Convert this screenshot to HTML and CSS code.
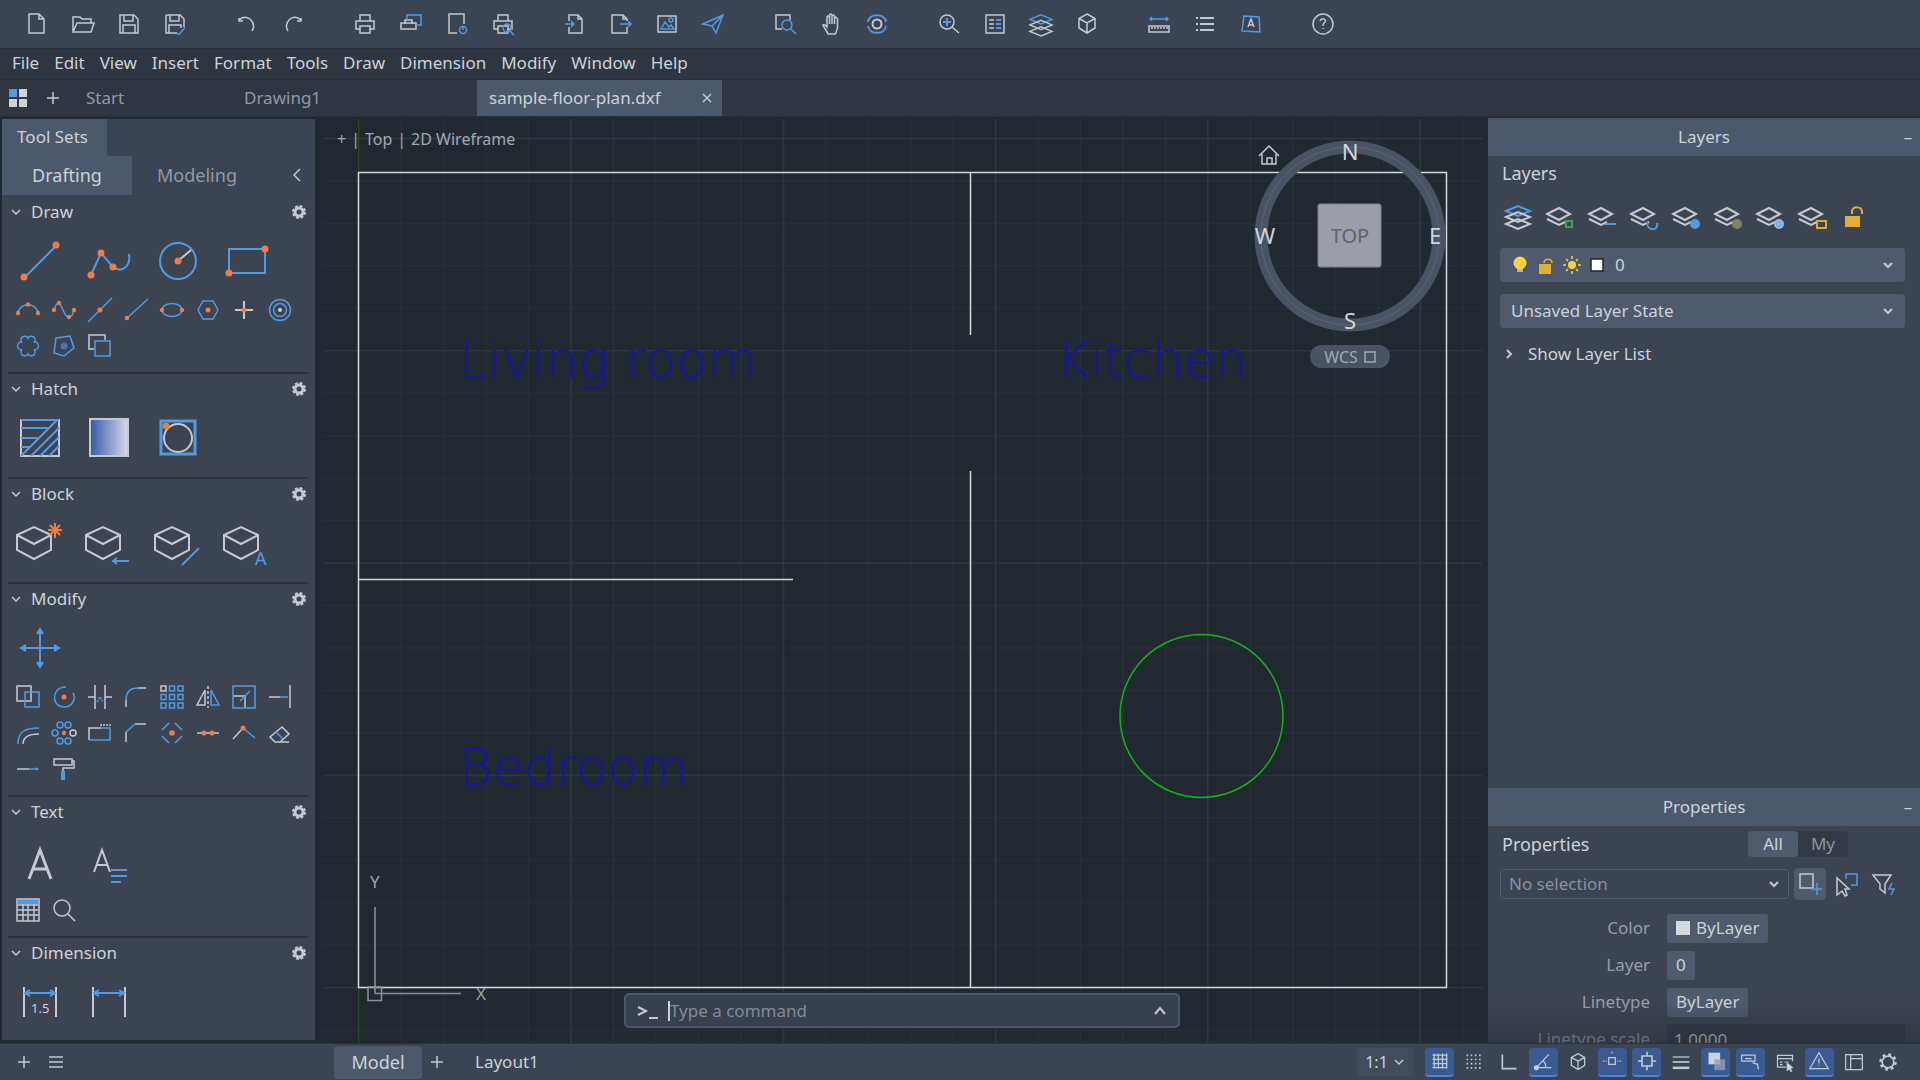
FILE: index.html
```html
<!DOCTYPE html>
<html lang="en">
<head>
<meta charset="utf-8">
<title>sample-floor-plan.dxf</title>
<link rel="stylesheet" href="styles.css">
</head>
<body>
<svg class="defs" aria-hidden="true">
  <symbol id="gear" viewBox="0 0 14 14"><circle cx="7" cy="7" r="4" stroke-width="3"/><circle cx="7" cy="7" r="6" stroke-width="2" stroke-dasharray="2.8 1.9"/></symbol>
  <symbol id="down" viewBox="0 0 12 12"><path d="M2 4l4 4 4-4"/></symbol>
  <symbol id="plus" viewBox="0 0 14 14"><path d="M7 1v12M1 7h12"/></symbol>
  <symbol id="block" viewBox="0 0 50 50"><path d="M8 17l17-8 17 8v15l-17 9-17-9zM8 17l17 9 17-9" stroke-width="2"/></symbol>
  <symbol id="sheets" viewBox="0 0 30 30"><path d="M2 12l12-6 11 6-11 6zM2 17l12 6 6-3"/></symbol>
  <symbol id="stack" viewBox="0 0 30 30"><path class="b" d="M3 9l12-5 12 5-12 5z"/><path d="M3 15l12-5 12 5-12 5zM3 22l12-5 12 5-12 5z"/></symbol>
  <symbol id="printer" viewBox="0 0 24 24"><path d="M7 9V3h10v6M7 17H3V9h18v8h-4M7 14h10v7H7z"/></symbol>
  <symbol id="cube" viewBox="0 0 24 24"><path d="M12 2l8 4.500v9.500l-8 5-8-5V6.500zM4 6.500l8 4.500 8-4.500M12 11v10"/></symbol>
  <symbol id="page" viewBox="0 0 24 24"><path d="M4 2h10l5 5v14H4zM14 2v5h5"/></symbol>
  <symbol id="disk" viewBox="0 0 24 24"><path d="M3 3h14l4 4v14H3zM7 3v6h9V3M6 21v-8h12v8"/></symbol>
</svg>
<div class="app">
<header class="toolbar">
  <div class="group">
    <button aria-label="New"><svg viewBox="0 0 24 24"><use href="#page"/></svg></button>
    <button aria-label="Open"><svg viewBox="0 0 24 24"><path d="M2 20V5h7l2 2h9v4M2 20l4-9h17l-3 9z"/></svg></button>
    <button aria-label="Save"><svg viewBox="0 0 24 24"><use href="#disk"/></svg></button>
    <button aria-label="Save as"><svg viewBox="0 0 24 24"><path d="M3 3h14l4 4v8M3 3v18h11M7 3v6h9V3M6 21v-8h12v3"/><path class="b" d="M14 21l2 1.500 6-7"/></svg></button>
  </div>
  <div class="group">
    <button aria-label="Undo"><svg viewBox="0 0 24 24"><path d="M4 6v3h4M4 8q5-5 11-1 6 6 2 12"/></svg></button>
    <button aria-label="Redo"><svg viewBox="0 0 24 24"><path d="M20 6v3h-4M20 8q-5-5-11-1-6 6-2 12"/></svg></button>
  </div>
  <div class="group">
    <button aria-label="Plot"><svg viewBox="0 0 24 24"><use href="#printer"/></svg></button>
    <button aria-label="Batch plot"><svg viewBox="0 0 24 24"><path d="M6 12V8h7v4M2 17v-6h15v6z"/><path class="b" d="M8 8V3h14v10h-5"/></svg></button>
    <button aria-label="Page setup"><svg viewBox="0 0 24 24"><path d="M12 21H4V2h15v10"/><circle class="b" cx="18" cy="18" r="3.500"/><path class="b" d="M18 14v4"/></svg></button>
    <button aria-label="Plot preview"><svg viewBox="0 0 24 24"><use href="#printer"/><circle class="b" cx="16" cy="16" r="4"/><path class="b" d="M19 19l4 4"/></svg></button>
  </div>
  <div class="group">
    <button aria-label="Import"><svg viewBox="0 0 24 24"><path d="M6 9V3h9l4 4v14H6v-6M15 3v4h4"/><path class="b" d="M2 12h9m-3-3 3 3-3 3"/></svg></button>
    <button aria-label="Export"><svg viewBox="0 0 24 24"><path d="M18 9V7l-4-4H3v18h15v-6M14 3v4h4"/><path class="b" d="M11 12h11m-3-3 3 3-3 3"/></svg></button>
    <button aria-label="Attach image"><svg viewBox="0 0 24 24"><path d="M3 4h18v16H3z"/><path class="b" d="M6 17l4-7 4 5 2-2 3 4z"/><circle class="b" cx="16" cy="8" r="2"/></svg></button>
    <button aria-label="Share"><svg viewBox="0 0 24 24"><path class="b" d="M2 12L22 3l-7 18-4-7zM11 14L22 3"/></svg></button>
  </div>
  <div class="group">
    <button aria-label="Zoom window"><svg viewBox="0 0 24 24"><path d="M9 17H3V3h14v5"/><circle class="b" cx="14" cy="13" r="5"/><path class="b" d="M18 17l5 5"/></svg></button>
    <button aria-label="Pan"><svg viewBox="0 0 24 24"><path d="M9 22c-1-3-4-6-5-9 2-1 3 1 4 2V5q1-2 2.500 0V3q1-2 2.500 0v1q1-2 2.500 0v2q2-2 3 1v9l-2 6zM10.500 5v7M13 4v8M15.500 6v6"/></svg></button>
    <button aria-label="Orbit"><svg viewBox="0 0 24 24"><circle cx="12" cy="12" r="4.500" stroke-width="2"/><path class="b" d="M3 10c1-9 17-9 18 0M3 14c1 9 17 9 18 0" stroke-width="2"/></svg></button>
  </div>
  <div class="group">
    <button aria-label="Zoom in"><svg viewBox="0 0 24 24"><circle cx="10" cy="10" r="7"/><path d="M15 15l7 6"/><path class="b" d="M10 6v8M6 10h8" stroke-width="2"/></svg></button>
    <button aria-label="Properties"><svg viewBox="0 0 24 24"><path d="M3 3h18v18H3zM6 8h5M6 12h5M6 16h5"/><path class="b" d="M13 8h5M13 12h5M13 16h5" stroke-width="2"/></svg></button>
    <button aria-label="Layers"><svg viewBox="2 1 26 26"><use href="#stack" width="30" height="30"/></svg></button>
    <button aria-label="Blocks"><svg viewBox="0 0 24 24"><use href="#cube"/></svg></button>
  </div>
  <div class="group">
    <button aria-label="Measure"><svg viewBox="0 0 24 24"><path d="M2 14h20v6H2zM5 15v2M8 15v2M11 15v2M14 15v2M17 15v2M20 15v2"/><path class="b" d="M3 7h18M5 5L3 7l2 2M19 5l2 2-2 2"/></svg></button>
    <button aria-label="List"><svg viewBox="0 0 24 24"><path d="M7 6h14M7 12h14M7 18h14M3 6h2M3 12h2M3 18h2" stroke-width="2"/></svg></button>
    <button aria-label="Annotation"><svg viewBox="0 0 24 24"><path class="b" d="M5 4l15 1 1 15-18-1z"/><path d="M9 15l3-8 3 8M10 13h4"/></svg></button>
  </div>
  <div class="group">
    <button aria-label="Help"><svg viewBox="0 0 24 24"><circle cx="12" cy="12" r="10"/><path d="M9 9q1-3 4-2 3 2 0 4-1 1-1 3M12 16v1"/></svg></button>
  </div>
</header>
<nav class="menu">
  <button>File</button><button>Edit</button><button>View</button><button>Insert</button><button>Format</button><button>Tools</button><button>Draw</button><button>Dimension</button><button>Modify</button><button>Window</button><button>Help</button>
</nav>
<div class="tabs">
  <button class="grid-button" aria-label="All drawings"><svg viewBox="0 0 18 18"><path class="bf" d="M0 0h8v8H0z"/><path class="wf" d="M10 0h8v8h-8zM0 10h8v8H0zM10 10h8v8h-8z"/></svg></button>
  <button class="add" aria-label="New tab"><svg viewBox="0 0 14 14"><use href="#plus"/></svg></button>
  <button class="tab start">Start</button>
  <button class="tab">Drawing1</button>
  <div class="tab active"><span>sample-floor-plan.dxf</span><button aria-label="Close tab"><svg viewBox="0 0 12 12"><path d="M2 2l8 8M10 2l-8 8"/></svg></button></div>
</div>
<main>
<aside class="tools">
  <div class="set-title"><span>Tool Sets</span></div>
  <div class="modes"><button class="on">Drafting</button><button class="off">Modeling</button><button class="fold" aria-label="Collapse"><svg viewBox="0 0 12 14"><path d="M9 1L3 7l6 6"/></svg></button></div>

  <section>
    <h2><svg class="ch" viewBox="0 0 12 12"><use href="#down"/></svg>Draw<button aria-label="Draw settings"><svg viewBox="0 0 14 14"><use href="#gear"/></svg></button></h2>
    <div class="big">
      <button aria-label="Line"><svg viewBox="0 0 50 50"><path class="b" d="M9 42L42 9"/><circle class="o" cx="9" cy="41" r="3.500"/><circle class="o" cx="41" cy="9" r="3.500"/></svg></button>
      <button aria-label="Polyline"><svg viewBox="0 0 50 50"><path class="b" d="M7 39L17 17l12 14c10 7 18-2 16-13"/><circle class="o" cx="7" cy="39" r="3.500"/><circle class="o" cx="17" cy="17" r="3.500"/><circle class="o" cx="29" cy="31" r="3.500"/></svg></button>
      <button aria-label="Circle"><svg viewBox="0 0 50 50"><circle class="b" cx="25" cy="25" r="18"/><path d="M25 25l13-11"/><circle class="o" cx="25" cy="25" r="3.500"/></svg></button>
      <button aria-label="Rectangle"><svg viewBox="0 0 50 50"><path class="b" d="M7 13h36v24H7z"/><circle class="o" cx="7" cy="37" r="3.500"/><circle class="o" cx="43" cy="13" r="3.500"/></svg></button>
    </div>
    <div class="small">
      <button aria-label="Arc"><svg viewBox="0 0 24 24"><path class="b" d="M2 15C4 4 20 4 22 15"/><circle class="o" cx="2" cy="15" r="2.200"/><circle class="o" cx="12" cy="6.500" r="2.200"/><circle class="o" cx="22" cy="15" r="2.200"/></svg></button>
      <button aria-label="Spline"><svg viewBox="0 0 24 24"><path class="b" d="M2 12c3-9 5-9 9 0s8 11 11 0"/><circle class="o" cx="2" cy="12" r="2.200"/><circle class="o" cx="7" cy="5" r="2.200"/><circle class="o" cx="17" cy="19" r="2.200"/><circle class="o" cx="22" cy="12" r="2.200"/></svg></button>
      <button aria-label="Construction line"><svg viewBox="0 0 24 24"><path class="b" d="M0 24L24 0"/><circle class="o" cx="12" cy="12" r="2.500"/></svg></button>
      <button aria-label="Ray"><svg viewBox="0 0 24 24"><path class="b" d="M3 20L24 1"/><circle class="o" cx="3" cy="20" r="2.200"/></svg></button>
      <button aria-label="Ellipse"><svg viewBox="0 0 24 24"><ellipse class="b" cx="12" cy="12" rx="10" ry="6.500"/><circle class="o" cx="2" cy="12" r="2.200"/><circle class="o" cx="22" cy="12" r="2.200"/></svg></button>
      <button aria-label="Polygon"><svg viewBox="0 0 24 24"><path class="b" d="M7 3h10l5 9-5 9H7l-5-9z"/><circle class="o" cx="12" cy="12" r="2.500"/></svg></button>
      <button aria-label="Point"><svg viewBox="0 0 24 24"><path d="M12 3v18M3 12h18" stroke-width="2"/><circle class="o" cx="12" cy="12" r="2.500"/></svg></button>
      <button aria-label="Donut"><svg viewBox="0 0 24 24"><circle class="b" cx="12" cy="12" r="10.500"/><circle class="b" cx="12" cy="12" r="6.500"/><circle class="wf" cx="12" cy="12" r="2"/></svg></button>
      <button aria-label="Revision cloud"><svg viewBox="0 0 24 24"><path class="b" d="M12 4A3.800 3.800 0 0 1 18.500 8A3.800 3.800 0 0 1 18.500 16A3.800 3.800 0 0 1 12 20A3.800 3.800 0 0 1 5.500 16A3.800 3.800 0 0 1 5.500 8A3.800 3.800 0 0 1 12 4z"/></svg></button>
      <button aria-label="Boundary"><svg viewBox="0 0 24 24"><path class="b" d="M4 4l14-2 4 12-10 8-10-3z"/><circle class="b2" cx="12" cy="12" r="3.500"/></svg></button>
      <button aria-label="Wipeout"><svg viewBox="0 0 24 24"><path d="M6 15H1V1h16v5"/><path class="b" d="M7 7h15v15H7z"/></svg></button>
    </div>
  </section>

  <section>
    <h2><svg class="ch" viewBox="0 0 12 12"><use href="#down"/></svg>Hatch<button aria-label="Hatch settings"><svg viewBox="0 0 14 14"><use href="#gear"/></svg></button></h2>
    <div class="big">
      <button aria-label="Hatch"><svg viewBox="0 0 50 50"><path d="M6 7h38v36H6z"/><path class="b" d="M6 7h38M6 15h27M6 25h17M6 34h9M6 43L42 7M16 43l28-28M25 43l19-19M34 43l10-10"/></svg></button>
      <button aria-label="Gradient"><svg viewBox="0 0 50 50"><defs><linearGradient id="fade"><stop offset="0" stop-color="#355aa8"/><stop offset="1" stop-color="#d9d8ea"/></linearGradient></defs><path d="M6 6h38v37H6z" fill="url(#fade)"/></svg></button>
      <button aria-label="Hatch boundary"><svg viewBox="0 0 50 50"><path class="b" d="M8 8h34v33H8z" stroke-width="3"/><circle cx="25" cy="25" r="14"/><circle class="o" cx="13" cy="13" r="3.500"/></svg></button>
    </div>
  </section>

  <section>
    <h2><svg class="ch" viewBox="0 0 12 12"><use href="#down"/></svg>Block<button aria-label="Block settings"><svg viewBox="0 0 14 14"><use href="#gear"/></svg></button></h2>
    <div class="big">
      <button aria-label="Create block"><svg viewBox="0 0 50 50"><use href="#block" x="-6"/><path class="os" d="M40 5v15M33 12h14M35 7l10 10M45 7L35 17"/></svg></button>
      <button aria-label="Insert block"><svg viewBox="0 0 50 50"><use href="#block" x="-6"/><path class="b" d="M45 43H30M33 40l-4 3 4 3"/></svg></button>
      <button aria-label="Edit block"><svg viewBox="0 0 50 50"><use href="#block" x="-6"/><path class="b" d="M46 30L29 47"/></svg></button>
      <button aria-label="Block attributes"><svg viewBox="0 0 50 50"><use href="#block" x="-6"/><text class="bf" x="33" y="47" font-size="18">A</text></svg></button>
    </div>
  </section>

  <section>
    <h2><svg class="ch" viewBox="0 0 12 12"><use href="#down"/></svg>Modify<button aria-label="Modify settings"><svg viewBox="0 0 14 14"><use href="#gear"/></svg></button></h2>
    <div class="big">
      <button aria-label="Move"><svg viewBox="0 0 50 50"><path class="b" d="M25 7v36M7 25h36"/><path class="bf" d="M25 4l4 7h-8zM25 46l4-7h-8zM4 25l7-4v8zM46 25l-7-4v8z"/></svg></button>
    </div>
    <div class="small">
      <button aria-label="Copy"><svg viewBox="0 0 24 24"><path d="M1 1h14v15H1z"/><path class="b" d="M9 7h14v15H9z"/></svg></button>
      <button aria-label="Rotate"><svg viewBox="0 0 24 24"><path class="b" d="M14 2H11C-1 5 0 22 12 22c9 0 12-9 9-14"/><circle class="o" cx="12" cy="12" r="2.500"/></svg></button>
      <button aria-label="Trim"><svg viewBox="0 0 24 24"><path d="M7 0v24M17 0v24M0 12h7M17 12h7"/><path class="b" d="M9 17l3-5 3 5" stroke-dasharray="2 1"/></svg></button>
      <button aria-label="Fillet"><svg viewBox="0 0 24 24"><path d="M2 22v-7M14 3h8"/><path class="b" d="M2 15Q2 3 14 3"/></svg></button>
      <button aria-label="Array"><svg viewBox="0 0 24 24"><path d="M1 1h5v5H1z"/><path class="b" d="M9.500 1h5v5h-5zM18 1h5v5h-5zM1 9.500h5v5H1zM9.500 9.500h5v5h-5zM18 9.500h5v5h-5zM1 18h5v5H1zM9.500 18h5v5h-5zM18 18h5v5h-5z"/></svg></button>
      <button aria-label="Mirror"><svg viewBox="0 0 24 24"><path d="M9 5v15H1z"/><path d="M12 1v22" stroke-dasharray="3 2"/><path class="b" d="M15 5v15h8z"/></svg></button>
      <button aria-label="Scale"><svg viewBox="0 0 24 24"><path d="M1 11h12v12"/><path class="b" d="M1 1h22v22H1zM8 16L18 6"/></svg></button>
      <button aria-label="Extend"><svg viewBox="0 0 24 24"><path d="M1 12h11M22 0v23"/><path class="b" d="M12 12h8"/></svg></button>
      <button aria-label="Offset"><svg viewBox="0 0 24 24"><path class="b" d="M2 23C2 11 8 7 23 7"/><path d="M7 23q0-10 16-10"/></svg></button>
      <button aria-label="Polar array"><svg viewBox="0 0 24 24"><g class="b"><circle cx="8" cy="4" r="3"/><circle cx="16" cy="4" r="3"/><circle cx="3" cy="12" r="3"/><circle cx="8" cy="20" r="3"/><circle cx="16" cy="20" r="3"/></g><circle cx="21" cy="12" r="3"/><circle class="o" cx="12" cy="12" r="2.200"/></svg></button>
      <button aria-label="Stretch"><svg viewBox="0 0 24 24"><path class="b" d="M13 7h9v12H1"/><path d="M1 19V7h12"/><path d="M12 4h12" stroke-dasharray="2 1"/></svg></button>
      <button aria-label="Chamfer"><svg viewBox="0 0 24 24"><path d="M2 21V11M11 3h11"/><path class="b" d="M2 11l9-8"/></svg></button>
      <button aria-label="Explode"><svg viewBox="0 0 24 24"><path class="b" d="M2 9l7-7M15 2l7 7M2 15l7 7M15 22l7-7"/><circle class="o" cx="12" cy="12" r="2.800"/></svg></button>
      <button aria-label="Join"><svg viewBox="0 0 24 24"><path d="M1 12h22"/><circle class="o" cx="8" cy="12" r="2.500"/><circle class="o" cx="16" cy="12" r="2.500"/></svg></button>
      <button aria-label="Break"><svg viewBox="0 0 24 24"><path d="M1 18L11 7"/><path class="b" d="M11 7l12 10"/><circle class="o" cx="11" cy="7" r="2.500"/></svg></button>
      <button aria-label="Erase"><svg viewBox="0 0 24 24"><path d="M2 16L14 6l7 7-9 8H7zM12 21h9"/><path class="b" d="M8 11l7 7"/></svg></button>
      <button aria-label="Lengthen"><svg viewBox="0 0 24 24"><path d="M1 12h12"/><path class="b" d="M13 12h8"/><path class="bf" d="M20 10l3 2-3 2z"/></svg></button>
      <button aria-label="Match properties"><svg viewBox="0 0 24 24"><path d="M2 2h18v6H2zM20 4h2v7H11v3"/><path class="b" d="M11 14v9" stroke-width="4"/></svg></button>
    </div>
  </section>

  <section>
    <h2><svg class="ch" viewBox="0 0 12 12"><use href="#down"/></svg>Text<button aria-label="Text settings"><svg viewBox="0 0 14 14"><use href="#gear"/></svg></button></h2>
    <div class="big">
      <button aria-label="Single line text"><svg viewBox="0 0 50 50"><path d="M14 43L25 14l11 29M18 33h14" stroke-width="3"/></svg></button>
      <button aria-label="Multiline text"><svg viewBox="0 0 50 50"><path d="M10 36L18 14l8 22M13 29h10"/><path class="b" d="M27 34h16M27 40h16M27 46h10"/></svg></button>
    </div>
    <div class="small">
      <button aria-label="Table"><svg viewBox="0 0 24 24"><path d="M1 1h22v22H1zM1 7h22M1 12h22M1 17h22M7 6v17M12 6v17M18 6v17"/><path class="b" d="M2 4h20" stroke-width="4"/></svg></button>
      <button aria-label="Find"><svg viewBox="0 0 24 24"><circle cx="10" cy="10" r="8"/><path d="M16 16l7 7"/></svg></button>
    </div>
  </section>

  <section>
    <h2><svg class="ch" viewBox="0 0 12 12"><use href="#down"/></svg>Dimension<button aria-label="Dimension settings"><svg viewBox="0 0 14 14"><use href="#gear"/></svg></button></h2>
    <div class="big">
      <button aria-label="Dimension"><svg viewBox="0 0 50 50"><path d="M9 10v30M41 10v30"/><path class="b" d="M10 16h30M15 13l-5 3 5 3M35 13l5 3-5 3"/><text class="wf" x="16" y="36" font-size="13">1.5</text></svg></button>
      <button aria-label="Linear dimension"><svg viewBox="0 0 50 50"><path d="M9 10v30M41 10v30"/><path class="b" d="M10 16h30M15 13l-5 3 5 3M35 13l5 3-5 3"/></svg></button>
    </div>
  </section>
</aside>

<div class="canvas">
  <svg class="drawing" viewBox="316 117 1172 926" preserveAspectRatio="xMidYMid slice">
    <defs>
      <pattern id="minor" x="358" y="987" width="42.460" height="42.460" patternUnits="userSpaceOnUse"><path d="M0 .5H43M.5 0V43" stroke="#283039"/></pattern>
      <pattern id="major" x="358" y="987" width="212.300" height="212.300" patternUnits="userSpaceOnUse"><path d="M0 .5H213M.5 0V213" stroke="#303841"/></pattern>
    </defs>
    <rect x="323" y="119" width="1159" height="924" fill="url(#minor)" stroke="none"/>
    <rect x="323" y="119" width="1159" height="924" fill="url(#major)" stroke="none"/>
    <path d="M323 987.500H1482" stroke="#54282f" stroke-width="1"/>
    <path d="M358.500 119V1043" stroke="#244a24" stroke-width="1"/>
    <g class="room" fill="#1414a0"><text x="459" y="378">Living room</text><text x="1056" y="378">Kitchen</text><text x="459" y="785">Bedroom</text></g>
    <path d="M358.500 172.500H1446.500V987.500H358.500zM970.500 172V335M970.500 471V987M358 579.500H793" stroke="#d6d9dc"/>
    <circle cx="1201.500" cy="716" r="81.500" stroke="#0fb515"/>
    <path d="M375 907V993.500H461M368 987h13.500v13.500H368z" stroke="#8c9299"/>
    <g class="axis" fill="#9aa0a7"><text x="370" y="888">Y</text><text x="476" y="1000">X</text></g>
  </svg>
  <div class="view-label"><span>+</span><span>|</span><span>Top</span><span>|</span><span>2D Wireframe</span></div>
  <div class="compass">
    <svg class="ring" viewBox="0 0 192 192">
      <circle cx="96" cy="96" r="89" stroke="#4a5362" stroke-width="13"/><circle cx="96" cy="96" r="89" stroke="#59667a" stroke-width="1"/>
      <rect x="64" y="64" width="63" height="63" rx="2" fill="#9b9da8" stroke="#7e828d" stroke-width="1"/>
      <g class="wind" fill="#d3d6db" text-anchor="middle"><text x="96" y="20">N</text><text x="96" y="189">S</text><text x="11" y="104">W</text><text x="181" y="104">E</text></g>
      <text class="top" fill="#5f636d" text-anchor="middle" x="96" y="103">TOP</text>
    </svg>
    <svg class="home" viewBox="0 0 22 22"><path d="M1 12L11 2l10 10M4 10v10h14V10M9 20v-6h5v6"/></svg>
    <button class="wcs">WCS <svg viewBox="0 0 12 12"><path d="M1 1h10v10H1z"/></svg></button>
  </div>
  <label class="command"><svg class="prompt" viewBox="0 0 22 16"><path d="M1 4l8 4-8 4M12 15h9"/></svg><span class="caret"></span><input aria-label="Command" placeholder="Type a command"><svg class="up" viewBox="0 0 12 12"><path d="M1 9l5-6 5 6"/></svg></label>
</div>

<aside class="side">
  <section class="layers">
    <header><span>Layers</span><button aria-label="Minimize layers">–</button></header>
    <h3>Layers</h3>
    <div class="layer-tools">
      <button aria-label="All layers"><svg viewBox="0 0 30 30"><use href="#stack"/></svg></button>
      <button aria-label="New layer"><svg viewBox="0 0 30 30"><use href="#sheets"/><path d="M21 19h6v6h-6z" stroke="#44a15a"/></svg></button>
      <button aria-label="Match layer"><svg viewBox="0 0 30 30"><use href="#sheets"/><path class="b" d="M18 22h11"/></svg></button>
      <button aria-label="Previous layer"><svg viewBox="0 0 30 30"><use href="#sheets"/><path class="b" d="M18 20c0 10 12 9 10 1"/></svg></button>
      <button aria-label="Layer on"><svg viewBox="0 0 30 30"><use href="#sheets"/><circle class="bf" cx="24" cy="22" r="5"/></svg></button>
      <button aria-label="Layer off"><svg viewBox="0 0 30 30"><use href="#sheets"/><circle cx="24" cy="22" r="5" fill="#85845d" stroke="none"/></svg></button>
      <button aria-label="Freeze layer"><svg viewBox="0 0 30 30"><use href="#sheets"/><circle cx="24" cy="22" r="5" fill="#8fbce6" stroke="none"/><circle class="b" cx="24" cy="22" r="2.500" stroke-width="1" stroke-dasharray="2 1"/></svg></button>
      <button aria-label="Lock layer"><svg viewBox="0 0 30 30"><use href="#sheets"/><path d="M20 19h9v7h-9z" stroke="#e0a930"/></svg></button>
      <button aria-label="Unlock layer"><svg viewBox="0 0 30 30"><path d="M6 14h15v11H6z" fill="#e4ad36" stroke="none"/><path d="M13 12V9c1-5 10-5 10 1v2" stroke="#e4ad36"/></svg></button>
    </div>
    <div class="field layer-field">
      <svg viewBox="0 0 18 20"><path d="M6 12h6v5H6z" fill="#aeb2ba" stroke="none"/><circle cx="9" cy="8" r="6.500" fill="#f8d33b" stroke="none"/></svg>
      <svg viewBox="0 0 18 20"><path d="M2 9h12v10H2z" fill="#e4ad36" stroke="none"/><path d="M7 8c0-5 8-5 8 0" stroke="#e4ad36"/></svg>
      <svg viewBox="0 0 18 20"><circle cx="9" cy="10" r="4" fill="#f8d33b" stroke="none"/><path d="M9 1v3M9 16v3M0 10h3M15 10h3M3 4l2 2M13 14l2 2M15 4l-2 2M3 16l2-2" stroke="#f8d33b"/></svg>
      <svg viewBox="0 0 18 20"><path d="M2 4h12v12H2z" fill="#fff" stroke="#20242b"/></svg>
      <select aria-label="Current layer"><option>0</option></select>
      <svg class="arrow" viewBox="0 0 12 12"><use href="#down"/></svg>
    </div>
    <div class="field"><select aria-label="Layer state"><option>Unsaved Layer State</option></select><svg class="arrow" viewBox="0 0 12 12"><use href="#down"/></svg></div>
    <button class="show-list"><svg viewBox="0 0 12 12"><path d="M4 2l4 4-4 4"/></svg>Show Layer List</button>
  </section>
  <section class="properties">
    <header><span>Properties</span><button aria-label="Minimize properties">–</button></header>
    <div class="title-row"><h3>Properties</h3><div class="toggle"><button class="on">All</button><button>My</button></div></div>
    <div class="selection">
      <div class="field hollow"><select aria-label="Selection"><option>No selection</option></select><svg class="arrow" viewBox="0 0 12 12"><use href="#down"/></svg></div>
      <button class="pressed" aria-label="Add to selection"><svg viewBox="0 0 24 24"><path d="M2 2h13v14H2z"/><path class="b" d="M19 11v12M13 17h11"/></svg></button>
      <button aria-label="Select objects"><svg viewBox="0 0 24 24"><path d="M2 6v17l5-4 3 5 2-1-2-6h4z"/><path class="b" d="M11 7V2h11v11h-6"/></svg></button>
      <button aria-label="Quick select"><svg viewBox="0 0 24 24"><path d="M1 3h18l-6 9v9l-5-4v-5z"/><path class="b" d="M20 11l-3 6h5l-3 6"/></svg></button>
    </div>
    <div class="props">
      <span>Color</span><button><i></i>ByLayer</button>
      <span>Layer</span><button>0</button>
      <span>Linetype</span><button>ByLayer</button>
      <label for="scale">Linetype scale</label><input id="scale" value="1.0000">
    </div>
  </section>
</aside>
</main>

<footer>
  <div class="layouts">
    <button class="icon" aria-label="Add"><svg viewBox="0 0 14 14"><use href="#plus"/></svg></button>
    <button class="icon" aria-label="Layout menu"><svg viewBox="0 0 14 14"><path d="M0 2h14M0 7h14M0 12h14"/></svg></button>
  </div>
  <button class="model">Model</button>
  <button class="icon" aria-label="New layout"><svg viewBox="0 0 14 14"><use href="#plus"/></svg></button>
  <button class="layout">Layout1</button>
  <button class="ratio">1:1 <svg viewBox="0 0 12 12"><use href="#down"/></svg></button>
  <div class="status">
    <button class="on" aria-label="Grid"><svg viewBox="0 0 24 24"><path d="M3 5h18M3 10h18M3 15h18M3 20h18M5 3v18M10 3v18M15 3v18M20 3v18"/></svg></button>
    <button aria-label="Snap"><svg viewBox="0 0 24 24"><path d="M3 4h18M3 9h18M3 14h18M3 19h18" stroke-width="2" stroke-dasharray="2 3"/></svg></button>
    <button aria-label="Ortho"><svg viewBox="0 0 24 24"><path d="M4 3v17h17" stroke-width="2"/></svg></button>
    <button class="on" aria-label="Polar tracking"><svg viewBox="0 0 24 24"><path d="M19 4L4 20h18M12 12q4 3 3 8"/><circle class="wf" cx="4" cy="20" r="3"/></svg></button>
    <button aria-label="Isometric"><svg viewBox="0 0 24 24"><use href="#cube"/></svg></button>
    <button class="on" aria-label="Object tracking"><svg viewBox="0 0 24 24"><path d="M8 8h8v8H8zM12 1v2M1 12h2M5 12h1M18 12h1M21 12h2"/></svg></button>
    <button class="on" aria-label="Object snap"><svg viewBox="0 0 24 24"><path d="M6 6h12v12H6zM12 1v5M12 18v5M1 12h5M18 12h5" stroke-width="2"/></svg></button>
    <button aria-label="Lineweight"><svg viewBox="0 0 24 24"><path d="M2 6h20"/><path d="M2 12h20" stroke-width="2"/><path d="M2 19h20" stroke-width="3"/></svg></button>
    <button class="on" aria-label="Transparency"><svg viewBox="0 0 24 24"><path class="wf" d="M3 2h14v14H3z"/><path d="M10 10h13v13H10z" fill="#929fbc" fill-opacity=".8" stroke="none"/></svg></button>
    <button class="on" aria-label="Dynamic input"><svg viewBox="0 0 24 24"><path d="M2 5h16v7H2zM6 9h8M15 14l6 2 1 6"/></svg></button>
    <button aria-label="Quick properties"><svg viewBox="0 0 24 24"><path d="M13 18H3V4h18v7M3 8h18M6 12h3M6 15h3"/><path class="b" d="M11 12h6"/><path class="wf" d="M14 12l8 7-3 1 2 3-2 1-2-3-3 2z"/></svg></button>
    <button class="on" aria-label="Annotation monitor"><svg viewBox="0 0 24 24"><path d="M12 2L1 21h22zM12 9v6M12 17v1"/></svg></button>
    <button aria-label="Workspace"><svg viewBox="0 0 24 24"><path d="M2 3h20v18H2zM8 3v18M8 8h14"/></svg></button>
    <button aria-label="Settings"><svg viewBox="0 0 24 24"><circle cx="12" cy="12" r="7" stroke-width="2"/><circle cx="12" cy="12" r="9" stroke-width="3" stroke-dasharray="3.500 3.570"/></svg></button>
  </div>
</footer>
</div>
</body>
</html>
```
FILE: styles.css
```css
* { box-sizing: border-box; }
body, h2, h3 { margin: 0; font-weight: 400; }
body { background: #222830; color: #ced2d9; font: 17px/24px "Noto Sans", "Open Sans", sans-serif; }
button, input, select { font: inherit; color: inherit; }
button { display: flex; align-items: center; justify-content: center; margin: 0; padding: 0; border: 0; background: none; }
svg { display: block; flex: none; fill: none; stroke: #c5c9d1; stroke-width: 1.5; overflow: visible; }
svg text { stroke: none; }
.defs { position: absolute; width: 0; height: 0; }
.b { stroke: #519ae6; }
.bf { fill: #519ae6; stroke: none; }
.b2 { fill: #3f78b8; stroke: none; }
.wf { fill: #ced2d9; stroke: none; }
.o { fill: #ed7d42; stroke: none; }
.os { stroke: #ed7d42; }

.app { display: flex; flex-direction: column; height: 100vh; overflow: hidden; }

.toolbar { display: flex; flex: none; gap: 48px; height: 49px; padding: 0 25px; align-items: center; background: #3b4452; border-bottom: 1px solid #272e39; }
.group { display: flex; gap: 22px; }
.toolbar svg { width: 24px; height: 24px; }

.menu { display: flex; flex: none; gap: 15px; height: 31px; padding: 0 12px 3px; background: #303641; border-bottom: 1px solid #272e39; }
.tabs { display: flex; flex: none; height: 37px; background: #303641; border-bottom: 1px solid #272e39; color: #9499a3; }
.grid-button { width: 36px; }
.grid-button svg { width: 18px; height: 18px; }
.add { width: 34px; }
.add svg { width: 14px; height: 14px; }
.tab { display: flex; align-items: center; justify-content: flex-start; width: 245px; padding: 0 12px; }
.tab.start { width: 162px; padding-left: 16px; }
.tab.active { justify-content: space-between; padding-right: 9px; background: #4c596c; color: #ced2d9; }
.tab svg { width: 12px; height: 12px; }

main { display: grid; grid-template-columns: 316px 1fr 432px; flex: 1; min-height: 0; }

.tools { overflow: hidden; margin: 2px 1px 3px 2px; background: #3d4451; }
.set-title { display: flex; height: 37px; }
.set-title span { width: 105px; padding: 6px 4px 6px 0; background: #4c596c; text-align: center; }
.set-title, .modes { background: #3b4452; }
.modes { display: flex; height: 39px; }
.modes button { width: 130px; padding-bottom: 2px; font-size: 18px; }
.modes .on { background: #4c596c; }
.modes .off { color: #9499a3; }
.modes .fold { width: 53px; padding-left: 16px; }
.fold svg { width: 12px; height: 14px; }
.tools section { position: relative; padding-bottom: 9px; }
.tools section + section::before { content: ""; position: absolute; top: -1px; left: 6px; right: 7px; height: 2px; background: #2b323e; }
.tools h2 { display: flex; align-items: center; gap: 9px; height: 33px; padding: 0 9px 0 8px; font-size: 17px; }
.tools section + section h2 { height: 32px; }
.ch { width: 12px; height: 12px; }
.tools h2 button { margin-left: auto; }
.tools h2 button svg { width: 14px; height: 14px; }
.big { display: flex; height: 64px; padding: 2px 3px 0; }
.big button { width: 69px; }
.big svg { width: 50px; height: 50px; stroke-width: 2; }
.small { display: grid; grid-template-columns: repeat(8, 36px); grid-auto-rows: 36px; padding-left: 8px; }
.small svg { width: 24px; height: 24px; }

.canvas { position: relative; overflow: hidden; }
.drawing { width: 100%; height: 100%; }
.room { font-family: "DejaVu Sans", sans-serif; font-size: 51px; font-weight: 200; }
.axis { font-size: 17px; }
.view-label { position: absolute; top: 10px; left: 21px; display: flex; gap: 5px; color: #a3a9b0; font-size: 16px; }
.compass { position: absolute; top: 23px; right: 42px; width: 192px; }
.ring { width: 192px; height: 192px; }
.wind { font-size: 22px; }
.top { font-size: 20px; }
.home { position: absolute; top: 4px; left: 4px; width: 22px; height: 22px; }
.wcs { gap: 6px; width: 80px; height: 23px; margin: 13px auto 0; border-radius: 12px; background: #4a5362; color: #a3a9b0; font-size: 16px; }
.wcs svg { width: 12px; height: 12px; stroke: #a3a9b0; }
.command { position: absolute; left: 50%; bottom: 15px; display: flex; align-items: center; width: 556px; height: 35px; margin-left: -278px; padding: 0 12px 0 11px; border: 2px solid #4c586a; border-radius: 5px; background: #383f4d; }
.prompt { width: 22px; height: 16px; margin-right: 9px; stroke-width: 2; }
.caret { width: 2px; height: 20px; background: #ced2d9; }
.command input { flex: 1; min-width: 0; padding: 0; border: 0; background: none; outline: 0; }
.command input::placeholder { color: #858b96; opacity: 1; }
.up { width: 12px; height: 12px; stroke-width: 2; }

.side { display: flex; flex-direction: column; min-height: 0; background: #3d4451; overflow: hidden; margin-top: 1px; }
.side header { display: grid; grid-template-columns: 24px 1fr 24px; align-items: center; height: 38px; background: #4c596c; text-align: center; }
.side header span { grid-column: 2; }
.side h3 { font-size: 18px; line-height: 36px; }
.layers { flex: 1; display: flex; flex-direction: column; }
.layers h3 { padding-left: 14px; line-height: 34px; }
.layer-tools { display: flex; height: 58px; padding: 0 0 4px 15px; gap: 12px; }
.layer-tools svg { width: 30px; height: 30px; stroke-width: 2; }
.field { display: flex; align-items: center; gap: 8px; height: 34px; margin: 0 15px 12px 12px; padding: 0 11px; border-radius: 4px; background: #4f5a6c; }
.layer-field svg { width: 18px; height: 20px; }
.field select { flex: 1; min-width: 0; padding: 0; border: 0; background: none; appearance: none; outline: 0; }
.field .arrow { width: 12px; height: 12px; stroke-width: 2; }
.show-list { justify-content: flex-start; gap: 13px; margin: 0 15px; height: 28px; }
.show-list svg { width: 12px; height: 12px; stroke-width: 2; }

.properties { position: relative; flex: none; height: 255px; overflow: hidden; }
.properties::after { content: ""; position: absolute; left: 0; right: 0; bottom: 0; height: 40px; background: linear-gradient(transparent, rgba(38, 44, 54, .5)); pointer-events: none; }
.title-row { display: flex; justify-content: space-between; align-items: center; height: 36px; padding: 0 72px 0 14px; }
.toggle { display: flex; border-radius: 4px; background: #333945; color: #8f949e; }
.toggle button { width: 50px; height: 26px; border-radius: 4px; }
.toggle .on { background: #4f5a6c; color: #ced2d9; }
.selection { display: flex; align-items: center; height: 43px; padding: 0 20px 0 12px; gap: 5px; }
.selection button { width: 32px; height: 32px; border-radius: 4px; }
.selection .pressed { background: #4f5a6c; }
.selection button svg { width: 24px; height: 24px; }
.hollow { flex: 1; height: 30px; margin: 0; padding: 0 8px; border: 1px solid #525c6c; background: none; color: #8b909b; }
.props { display: grid; grid-template-columns: 162px 1fr; grid-auto-rows: 30px; gap: 7px 17px; align-items: center; padding: 8px 15px 0 0; }
.props span, .props label { color: #999ea8; text-align: right; }
.props button { justify-self: start; gap: 6px; height: 29px; padding: 0 9px; border-radius: 3px; background: #4f5a6c; }
.props i { width: 14px; height: 14px; background: #d7dae0; }
.props input { width: 100%; height: 30px; padding: 0 7px; border: 0; background: #333944; }

footer { display: flex; flex: none; align-items: center; height: 37px; padding-right: 17px; border-top: 1px solid #2a313c; background: #3b4452; }
.layouts { display: flex; gap: 2px; width: 334px; padding-left: 9px; }
.icon { width: 30px; height: 30px; }
.icon svg { width: 14px; height: 14px; }
.model { width: 88px; height: 33px; border-radius: 4px; background: #4c596c; font-size: 18px; }
.layout { margin-left: 23px; }
.ratio { width: 56px; height: 28px; gap: 5px; margin: 0 12px 0 auto; border-radius: 4px; background: #434c5a; font-size: 16px; }
.ratio svg { width: 12px; height: 12px; }
.status { display: flex; justify-content: space-between; width: 478px; }
.status button { width: 29px; height: 29px; border-radius: 4px; }
.status .on { border-bottom: 2px solid #4286e6; background: #3a5b92; }
.status svg { width: 20px; height: 20px; }
```
